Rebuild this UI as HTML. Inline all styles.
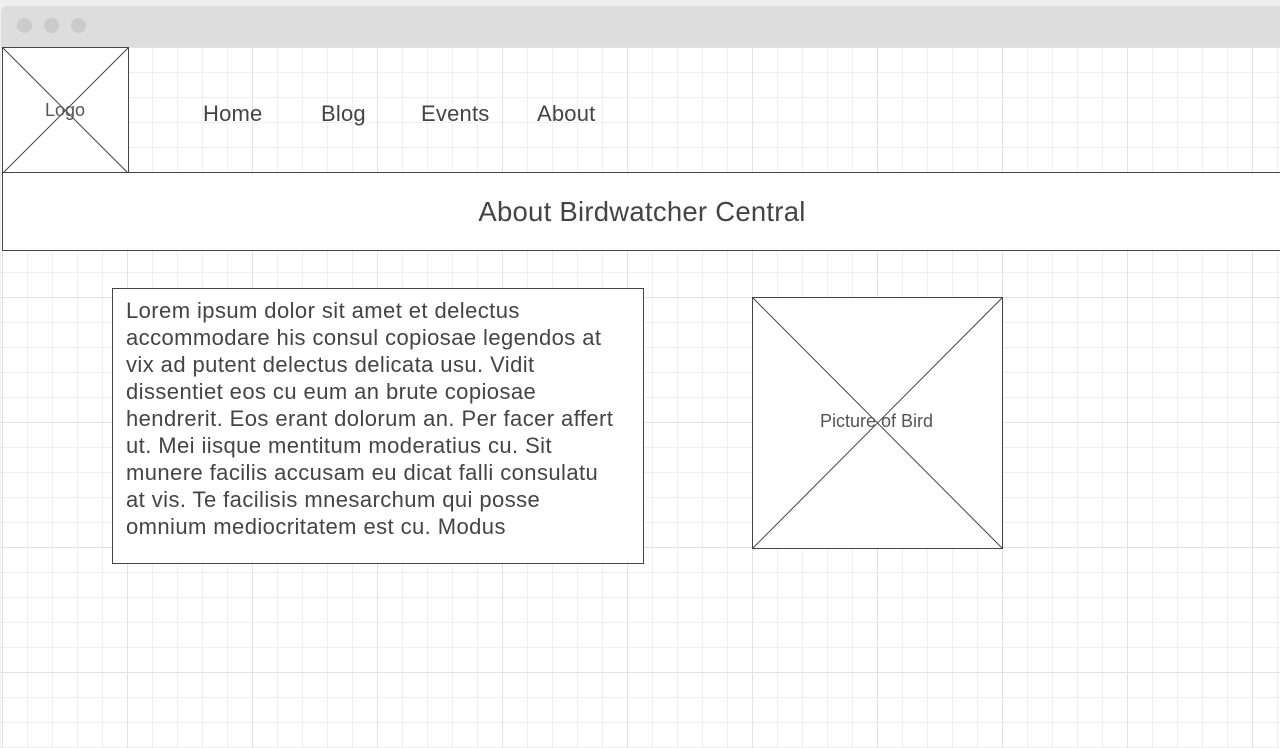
<!DOCTYPE html>
<html><head><style>
body{margin:0;width:1280px;height:748px;background:#efefef;position:relative;overflow:hidden;font-family:"Liberation Sans",sans-serif;color:#444}
.bar{position:absolute;left:1px;top:6px;width:1290px;height:41px;background:#dddddd;border-radius:6px 0 0 0}
.dot{position:absolute;top:18px;width:15px;height:15px;border-radius:50%;background:#cbcbcb}
.grid{position:absolute;left:1px;top:47px;width:1279px;height:701px;background-color:#fff;
background-image:
linear-gradient(to right,#e2e2e2 1px,transparent 1px),
linear-gradient(to bottom,#e2e2e2 1px,transparent 1px),
linear-gradient(to right,#efefef 1px,transparent 1px),
linear-gradient(to bottom,#efefef 1px,transparent 1px);
background-size:125px 125px,125px 125px,25px 25px,25px 25px;
background-position:1px 0,0 0,1px 0,0 0}
.box{position:absolute;background:#fff;border:1px solid #444;box-sizing:border-box}
.nav{position:absolute;top:101px;font-size:22px;color:#444;letter-spacing:0.2px}
</style></head><body>
<div class="bar"></div>
<div class="dot" style="left:17px"></div><div class="dot" style="left:44px"></div><div class="dot" style="left:71px"></div>
<div class="grid"></div>
<div class="box" style="left:2px;top:47px;width:127px;height:127px"></div>
<svg style="position:absolute;left:0;top:0" width="1280" height="748">
<line x1="3" y1="48" x2="128" y2="173" stroke="#444"/>
<line x1="128" y1="48" x2="3" y2="173" stroke="#444"/>
</svg>
<div style="position:absolute;left:45px;top:100px;font-size:18px;color:#555">Logo</div>
<div class="nav" style="left:203px">Home</div>
<div class="nav" style="left:321px">Blog</div>
<div class="nav" style="left:421px">Events</div>
<div class="nav" style="left:537px">About</div>
<div class="box" style="left:2px;top:172px;width:1290px;height:79px"></div>
<div style="position:absolute;left:0;width:1284px;top:196px;text-align:center;font-size:27.5px;color:#444;letter-spacing:0.25px">About Birdwatcher Central</div>
<div class="box" style="left:112px;top:288px;width:532px;height:276px;padding:8px 13px;font-size:22px;line-height:27px;color:#444;white-space:nowrap;letter-spacing:0.42px">Lorem ipsum dolor sit amet et delectus<br>accommodare his consul copiosae legendos at<br>vix ad putent delectus delicata usu. Vidit<br>dissentiet eos cu eum an brute copiosae<br>hendrerit. Eos erant dolorum an. Per facer affert<br>ut. Mei iisque mentitum moderatius cu. Sit<br>munere facilis accusam eu dicat falli consulatu<br>at vis. Te facilisis mnesarchum qui posse<br>omnium mediocritatem est cu. Modus</div>
<div class="box" style="left:752px;top:297px;width:251px;height:252px"></div>
<svg style="position:absolute;left:0;top:0" width="1280" height="748">
<line x1="753" y1="298" x2="1002" y2="548" stroke="#444"/>
<line x1="1002" y1="298" x2="753" y2="548" stroke="#444"/>
</svg>
<div style="position:absolute;left:752px;width:249px;top:411px;text-align:center;font-size:18px;color:#555">Picture of Bird</div>
</body></html>
